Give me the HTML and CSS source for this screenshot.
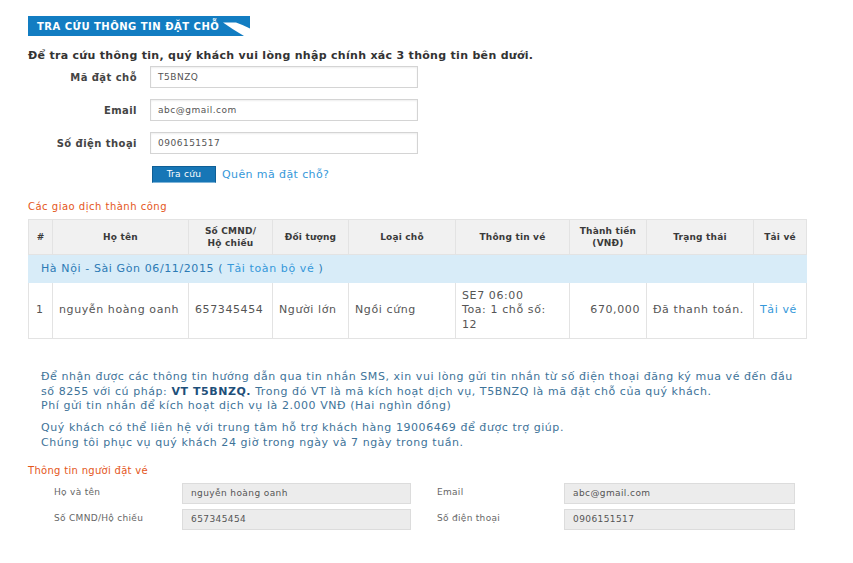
FILE: index.html
```html
<!DOCTYPE html>
<html lang="vi">
<head>
<meta charset="utf-8">
<title>Tra cứu thông tin đặt chỗ</title>
<link rel="stylesheet" href="styles.css">
</head>
<body>
<div class="page">
  <div class="title-bar">
    <span class="title-text">TRA CỨU THÔNG TIN ĐẶT CHỖ</span>
    <svg class="swoosh" width="222" height="20" viewBox="0 0 222 20"><path d="M195,6.5 L208,6.5 Q214,8.5 222,12.5 L222,20 L216,20 Q204,13 195,6.5 Z" fill="#fff"/></svg>
  </div>

  <p class="intro">Để tra cứu thông tin, quý khách vui lòng nhập chính xác 3 thông tin bên dưới.</p>

  <div class="search-form">
    <label class="f-label">Mã đặt chỗ</label>
    <div class="f-input">T5BNZQ</div>
    <label class="f-label">Email</label>
    <div class="f-input">abc@gmail.com</div>
    <label class="f-label">Số điện thoại</label>
    <div class="f-input">0906151517</div>
    <div></div>
    <div class="actions">
      <span class="btn">Tra cứu</span>
      <a class="forgot">Quên mã đặt chỗ?</a>
    </div>
  </div>

  <h3 class="section-title">Các giao dịch thành công</h3>

  <table class="tx">
    <colgroup>
      <col style="width:24px"><col style="width:136px"><col style="width:84px"><col style="width:76px"><col style="width:107px"><col style="width:114px"><col style="width:77px"><col style="width:107px"><col style="width:53px">
    </colgroup>
    <thead>
      <tr>
        <th>#</th><th>Họ tên</th><th>Số CMND/<br>Hộ chiếu</th><th>Đối tượng</th><th>Loại chỗ</th><th>Thông tin vé</th><th>Thành tiền<br>(VNĐ)</th><th>Trạng thái</th><th>Tải vé</th>
      </tr>
    </thead>
    <tbody>
      <tr class="group">
        <td colspan="9"><span class="route">Hà Nội - Sài Gòn 06/11/2015 ( <a class="lnk">Tải toàn bộ vé</a> )</span></td>
      </tr>
      <tr class="row">
        <td>1</td><td>nguyễn hoàng oanh</td><td>657345454</td><td>Người lớn</td><td>Ngồi cứng</td><td class="nowrap">SE7 06:00<br>Toa: 1 chỗ số:<br>12</td><td class="num">670,000</td><td>Đã thanh toán.</td><td><a class="lnk">Tải vé</a></td>
      </tr>
    </tbody>
  </table>

  <div class="note">
    <p>Để nhận được các thông tin hướng dẫn qua tin nhắn SMS, xin vui lòng gửi tin nhắn từ số điện thoại đăng ký mua vé đến đầu<br>số 8255 với cú pháp: <b>VT T5BNZQ.</b> Trong đó VT là mã kích hoạt dịch vụ, T5BNZQ là mã đặt chỗ của quý khách.<br>Phí gửi tin nhắn để kích hoạt dịch vụ là 2.000 VNĐ (Hai nghìn đồng)</p>
    <p>Quý khách có thể liên hệ với trung tâm hỗ trợ khách hàng 19006469 để được trợ giúp.<br>Chúng tôi phục vụ quý khách 24 giờ trong ngày và 7 ngày trong tuần.</p>
  </div>

  <h3 class="section-title small">Thông tin người đặt vé</h3>
  <div class="booker">
    <span class="b-label">Họ và tên</span>
    <div class="b-input">nguyễn hoàng oanh</div>
    <span class="b-label b-right">Email</span>
    <div class="b-input">abc@gmail.com</div>
    <span class="b-label">Số CMND/Hộ chiếu</span>
    <div class="b-input">657345454</div>
    <span class="b-label b-right">Số điện thoại</span>
    <div class="b-input">0906151517</div>
  </div>
</div>
</body>
</html>
```
FILE: styles.css
```css
html, body { margin: 0; padding: 0; background: #fff; }
body { font-family: "DejaVu Sans", Verdana, sans-serif; color: #555; }
.page { padding: 16px 0 0 28px; width: 778px; }

.title-bar {
  position: relative;
  width: 222px; height: 20px;
  background: #127dc2;
  display: flex; align-items: center;
}
.title-text { color: #fff; font-size: 10px; font-weight: bold; padding-left: 9px; letter-spacing: 0.5px; white-space: nowrap; }
.swoosh { position: absolute; left: 0; top: 0; }

.intro { margin: 13px 0 0; font-size: 11px; font-weight: bold; color: #333; line-height: 14px; letter-spacing: 0.3px; }

.search-form {
  display: grid;
  grid-template-columns: 109px 268px;
  column-gap: 13px; row-gap: 11px;
  margin-top: 3px;
  align-items: center;
}
.f-label { text-align: right; font-size: 10px; font-weight: bold; color: #444; letter-spacing: 0.45px; }
.f-input {
  box-sizing: border-box; height: 22px;
  border: 1px solid #d4d4d4; box-shadow: inset 0 1px 2px #eee;
  font-size: 9px; color: #555; padding: 0 7px; line-height: 20px; letter-spacing: 0.5px;
}
.actions { display: flex; align-items: center; gap: 6px; margin-top: 1px; padding-left: 2px; }
.btn {
  display: inline-block; width: 64px; height: 17px; box-sizing: border-box;
  background: #1776b6; border: 1px solid #0f5f96; border-bottom-color: #7fb4d8;
  color: #fff; font-size: 9px; text-align: center; line-height: 15px; letter-spacing: 0.3px;
}
.forgot { color: #3598da; font-size: 11px; letter-spacing: 0.4px; }

.section-title { margin: 18px 0 6px; font-size: 10px; font-weight: normal; color: #e4561b; line-height: 12px; letter-spacing: 0.5px; }

.tx { border-collapse: collapse; table-layout: fixed; width: 778px; font-size: 11px; }
.tx th, .tx td { border: 1px solid #e3e3e3; }
.tx th {
  background: #f1f1f1; color: #3a3a3a; font-size: 9px; font-weight: bold;
  height: 34px; padding: 0 3px; text-align: center; line-height: 12px; letter-spacing: 0.2px;
}
.tx .group td { background: #d8ecf8; height: 27px; padding: 0 0 0 12px; color: #2c7ab5; border-color: #d8ecf8; }
.route { font-size: 11px; letter-spacing: 0.6px; }
.lnk { color: #3598da; }
.tx .row td { height: 55px; padding: 0 6px; line-height: 14.5px; color: #555; letter-spacing: 0.6px; }
.tx .row td:first-child { padding-left: 7px; }
.tx .num { text-align: right; }
.tx .nowrap { white-space: nowrap; }

.note { margin: 31px 0 0 13px; color: #3e7399; font-size: 11px; line-height: 14.5px; letter-spacing: 0.56px; white-space: nowrap; }
.note p { margin: 0 0 7.5px; }
.note p:last-child { margin-bottom: 0; }
.note b { color: #1e4f7a; }

.section-title.small { margin-top: 15px; margin-bottom: 6px; font-size: 10px; letter-spacing: 0.3px; }

.booker {
  display: grid;
  grid-template-columns: 128px 229px 153px 231px;
  row-gap: 5px;
  padding-left: 26px;
  align-items: center;
}
.b-label { font-size: 9px; color: #666; letter-spacing: 0.3px; margin-top: -3px; }
.b-right { padding-left: 26px; }
.b-input {
  height: 21px; box-sizing: border-box;
  background: #ececec; border: 1px solid #dcdcdc;
  font-size: 9px; color: #555; padding: 0 8px; line-height: 19px; letter-spacing: 0.4px;
}
```
